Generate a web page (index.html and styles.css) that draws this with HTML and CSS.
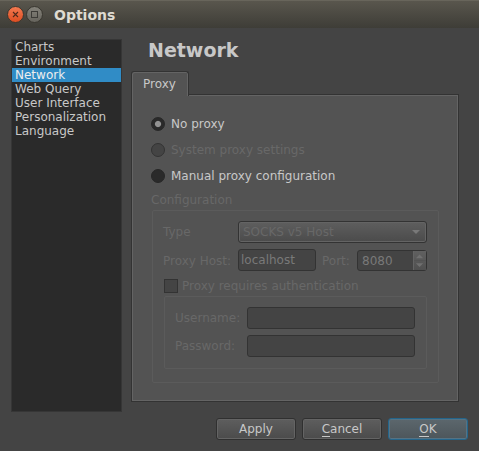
FILE: index.html
```html
<!DOCTYPE html>
<html lang="en">
<head>
<meta charset="utf-8">
<title>Options</title>
<link rel="stylesheet" href="styles.css">
</head>
<body>
<div class="window">
  <header class="titlebar">
    <svg class="controls" width="44" height="18" viewBox="0 0 44 18">
      <defs>
        <linearGradient id="close" x1="0" y1="0" x2="0" y2="1"><stop offset="0" stop-color="#f47b52"/><stop offset="1" stop-color="#dc4c20"/></linearGradient>
        <linearGradient id="max" x1="0" y1="0" x2="0" y2="1"><stop offset="0" stop-color="#85837b"/><stop offset="1" stop-color="#65635c"/></linearGradient>
      </defs>
      <circle cx="8.5" cy="8.5" r="8" fill="url(#close)" stroke="#38362f"/>
      <path d="M6 6l5 5M11 6l-5 5" stroke="#4e2a1c" stroke-width="1.1"/>
      <circle cx="27.5" cy="8.500" r="8" fill="url(#max)" stroke="#38362f"/>
      <rect x="24.5" y="5.5" width="6" height="6" fill="none" stroke="#3c3b37"/>
    </svg>
    <span class="caption">Options</span>
  </header>
  <main class="content">
    <ul class="categories">
      <li>Charts</li>
      <li>Environment</li>
      <li class="selected">Network</li>
      <li>Web Query</li>
      <li>User Interface</li>
      <li>Personalization</li>
      <li>Language</li>
    </ul>
    <section class="page">
      <h1>Network</h1>
      <div class="tab">Proxy</div>
      <div class="pane">
        <div class="radio"><i class="dot checked"></i>No proxy</div>
        <div class="radio disabled"><i class="dot"></i>System proxy settings</div>
        <div class="radio"><i class="dot"></i>Manual proxy configuration</div>
        <div class="group-title">Configuration</div>
        <div class="group">
          <div class="row type-row">
            <span class="label type">Type</span>
            <div class="combo">SOCKS v5 Host<svg width="8" height="4" viewBox="0 0 8 4"><path d="M0 0h8l-4 4z" fill="#797979"/></svg></div>
          </div>
          <div class="row host-row">
            <span class="label host">Proxy Host:</span>
            <div class="field address">localhost</div>
            <span class="label port">Port:</span>
            <div class="field spin"><span>8080</span>
              <svg width="13" height="19" viewBox="0 0 13 19"><path d="M2 7h8l-4-4zM2 12.500h8l-4 4z" fill="#707070"/><path d="M0 9.500h13" stroke="#535353"/></svg>
            </div>
          </div>
          <div class="row auth-row"><i class="check"></i>Proxy requires authentication</div>
          <div class="credentials">
            <div class="row"><span class="label">Username:</span><div class="field"></div></div>
            <div class="row"><span class="label">Password:</span><div class="field"></div></div>
          </div>
        </div>
      </div>
    </section>
  </main>
  <footer class="buttons">
    <div class="button">Apply</div>
    <div class="button"><span class="key">C</span>ancel</div>
    <div class="button default"><span class="key">O</span>K</div>
  </footer>
</div>
</body>
</html>
```

FILE: styles.css
```css
* { box-sizing: border-box; }
body {
  margin: 0;
  background: #444;
  color: #c8c8c8;
  font: 12px/14px "DejaVu Sans", sans-serif;
  overflow: hidden;
}
.window { width: 479px; height: 451px; display: flex; flex-direction: column; }
.titlebar {
  height: 28px;
  flex: none;
  display: flex;
  align-items: center;
  padding: 1px 0 0 7px;
  background: linear-gradient(#59564d, #3e3d37);
  border-top: 1px solid #68655b;
}
.caption { margin-left: 3px; font-size: 14px; font-weight: bold; line-height: 18px; color: #dfdbd2; }
.content { display: flex; height: 374px; margin: 11px 0 0 11px; }
.categories {
  width: 111px;
  height: 373px;
  margin: 0;
  padding: 0;
  list-style: none;
  background: #2a2a2a;
  border: 1px solid #363636;
}
.categories li { height: 14px; padding-left: 3px; white-space: nowrap; }
.categories .selected { background: #308cc6; color: #eee; }
.page { width: 328px; margin-left: 9px; }
h1 { margin: 0; height: 32px; padding-left: 17px; font-size: 19px; line-height: 22px; }
.tab {
  position: relative;
  z-index: 1;
  width: 58px;
  height: 25px;
  padding: 5px 0 0 11px;
  background: #535353;
  border: 1px solid #333;
  border-bottom: 0;
  border-radius: 3px 3px 0 0;
  box-shadow: inset 1px 1px #646464, inset -1px 0 #646464;
}
.pane {
  height: 308px;
  margin-top: -2px;
  padding: 22px 0 0 19px;
  background: #535353;
  border: 1px solid #333;
  box-shadow: inset 0 0 0 1px #646464;
}
.radio { display: flex; align-items: center; height: 14px; margin-bottom: 12px; white-space: nowrap; }
.dot { width: 14px; height: 14px; margin-right: 6px; border-radius: 50%; background: #2a2a2a; border: 1px solid #272727; }
.checked { background: radial-gradient(circle, #929292 2.6px, #2a2a2a 3.6px); }
.disabled { color: #686868; }
.disabled .dot { background: #444; border-color: #333; }
.group-title { height: 17px; margin-top: -2px; color: #686868; }
.group {
  width: 287px;
  height: 173px;
  margin-left: 1px;
  padding: 10px 0 0 10px;
  border: 1px solid #5b5b5b;
  border-radius: 2px;
  color: #686868;
}
.row { display: flex; align-items: center; white-space: nowrap; }
.label { flex: none; }
.type { width: 75px; }
.host { width: 75px; padding-top: 2px; }
.combo {
  width: 189px;
  height: 22px;
  display: flex;
  align-items: center;
  justify-content: space-between;
  padding: 0 6px 0 4px;
  background: linear-gradient(#5e5e5e, #4b4b4b);
  border: 1px solid #333;
  border-radius: 3px;
  box-shadow: inset 0 0 0 1px #646464;
}
.field { height: 22px; background: #444; border: 1px solid #333; border-radius: 3px; }
.host-row { margin-top: 6px; }
.address { width: 78px; padding: 3px 2px; color: #797979; }
.port { width: 35px; margin-left: 6px; padding-top: 2px; }
.spin { width: 70px; height: 21px; margin-top: 1px; display: flex; justify-content: space-between; padding-left: 4px; color: #797979; }
.spin span { padding-top: 3px; }
.spin svg { background: linear-gradient(#606060, #505050); border-left: 1px solid #646464; }
.auth-row { height: 14px; margin: 8px 0 0 1px; }
.check { width: 14px; height: 14px; margin-right: 4px; background: #444; border: 1px solid #333; }
.credentials {
  width: 263px;
  height: 73px;
  margin: 3px 0 0 1px;
  padding: 10px 0 0 10px;
  border: 1px solid #5b5b5b;
  border-radius: 2px;
}
.credentials .row { margin-bottom: 6px; }
.credentials .label { width: 72px; }
.credentials .field { width: 168px; }
.buttons { display: flex; gap: 6px; margin: 5px 0 0 216px; }
.button {
  width: 80px;
  height: 22px;
  padding-top: 3px;
  text-align: center;
  background: linear-gradient(#5e5e5e, #4b4b4b);
  border: 1px solid #303030;
  border-radius: 3px;
  box-shadow: inset 0 0 0 1px #646464;
}
.default { background: linear-gradient(#5c676d, #4d565b); border-color: #24658b; box-shadow: inset 0 0 0 1px #557384; }
.key { display: inline-block; height: 15px; border-bottom: 1px solid #c8c8c8; }
```
